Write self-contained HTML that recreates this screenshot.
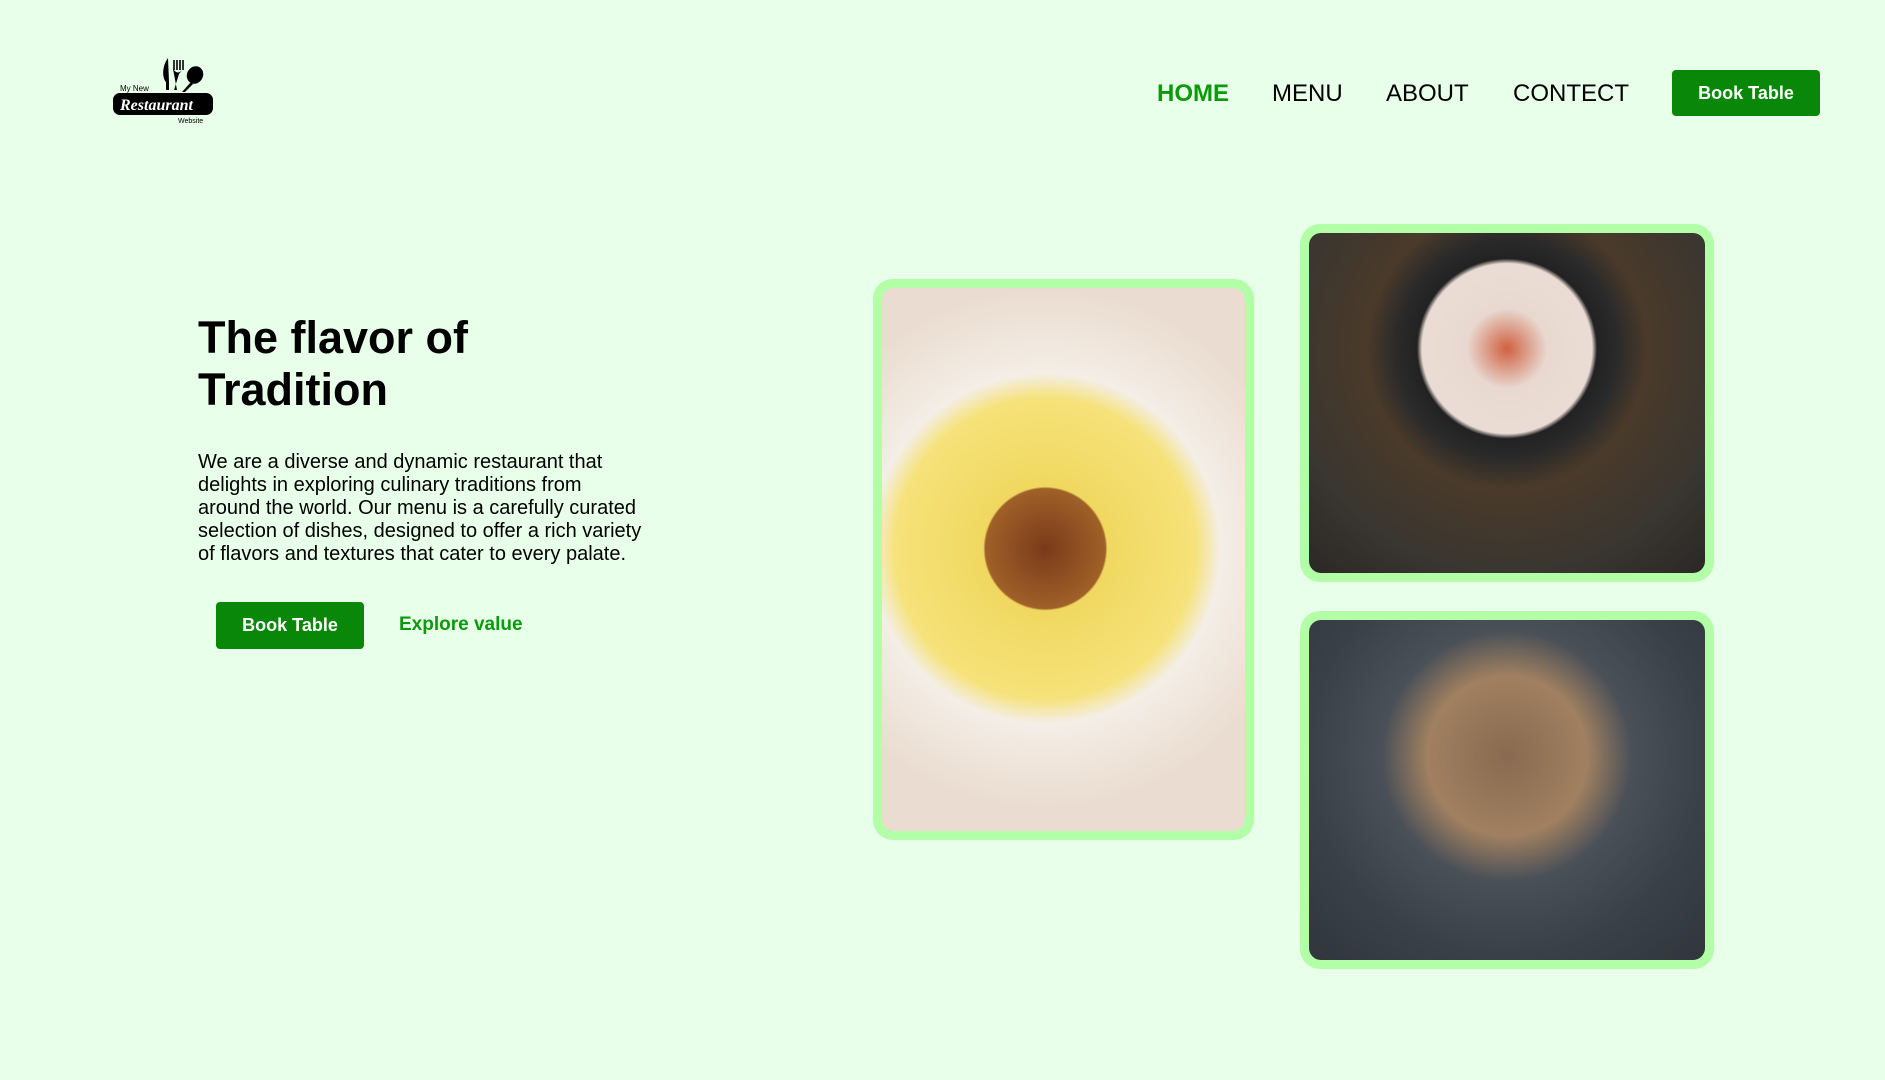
<!DOCTYPE html>
<html><head><meta charset="utf-8"><style>
*{margin:0;padding:0;box-sizing:border-box}
body{width:1885px;height:1080px;background:#e8ffea;font-family:"Liberation Sans",sans-serif;position:relative;overflow:hidden}
.a{position:absolute}
.nav{font-size:24px;color:#000;top:80px}
.btn{background:#088708;color:#fff;font-weight:bold;font-size:18px;border-radius:4px;display:flex;align-items:center;justify-content:center}
.fr{background:#b2ffa8;border-radius:20px;padding:9px}
.fr div{width:100%;height:100%;border-radius:12px}
</style></head><body>
<div class="a" style="left:112px;top:56px;width:104px;height:70px">
<svg width="104" height="70" viewBox="0 0 104 70">
<path d="M56 2 C50 10 50 22 54 26 L54 34 L57 34 L57 26 Z" fill="#000"/>
<path d="M62 4 v10 M65 4 v10 M68 4 v10 M71 4 v10" stroke="#000" stroke-width="1.6"/>
<path d="M61 13 Q66 20 71 13 L67 18 L62 34 L65 34 Z" fill="#000"/>
<ellipse cx="83" cy="19" rx="8" ry="9" transform="rotate(30 83 19)" fill="#000"/>
<path d="M79 26 L70 36 L73 36 L81 28 Z" fill="#000"/>
<text x="8" y="35" font-size="8" font-family="Liberation Sans">My New</text>
<rect x="1" y="37" width="100" height="22" rx="7" fill="#000"/>
<text x="8" y="54" font-size="16" font-style="italic" font-weight="bold" fill="#fff" font-family="Liberation Serif">Restaurant</text>
<text x="66" y="67" font-size="7" font-family="Liberation Sans">Website</text>
</svg></div>
<div class="a nav" style="left:1157px;color:#0a9a0a;font-weight:bold">HOME</div>
<div class="a nav" style="left:1272px">MENU</div>
<div class="a nav" style="left:1386px">ABOUT</div>
<div class="a nav" style="left:1513px">CONTECT</div>
<div class="a btn" style="left:1672px;top:70px;width:148px;height:46px">Book Table</div>
<div class="a" style="left:198px;top:312px;font-size:45px;font-weight:bold;line-height:52px">The flavor of<br>Tradition</div>
<div class="a" style="left:198px;top:451px;white-space:nowrap;font-size:20px;line-height:23px">We are a diverse and dynamic restaurant that<br>delights in exploring culinary traditions from<br>around the world. Our menu is a carefully curated<br>selection of dishes, designed to offer a rich variety<br>of flavors and textures that cater to every palate.</div>
<div class="a btn" style="left:216px;top:602px;width:148px;height:47px">Book Table</div>
<div class="a" style="left:399px;top:614px;font-size:19px;font-weight:bold;color:#0a9a0a">Explore value</div>
<div class="a fr" style="left:873px;top:279px;width:381px;height:561px"><div style="background:radial-gradient(circle at 45% 48%,#7a3a1a 0,#a06028 60px,#f0d860 62px,#f6e27a 150px,#f4eee6 175px,#eadcd0 260px)"></div></div>
<div class="a fr" style="left:1300px;top:224px;width:414px;height:358px"><div style="background:radial-gradient(circle at 50% 34%,#d06040 0,#e8d8d0 40px,#eadcd4 85px,#222 90px,#2a2a2a 110px,#4a3a2a 140px,#3a3630 220px,#2a2826 300px)"></div></div>
<div class="a fr" style="left:1300px;top:611px;width:414px;height:358px"><div style="background:radial-gradient(circle at 50% 40%,#8a6a50 0,#a08060 80px,#4a5058 125px,#3a4048 200px,#2e343a 300px)"></div></div>
</body></html>
